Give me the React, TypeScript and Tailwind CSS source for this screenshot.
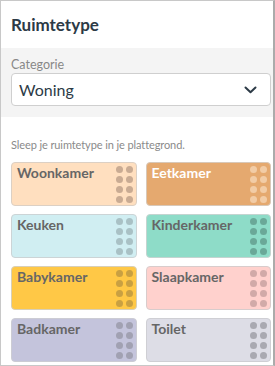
import React from "react";

type Room = { name: string; bg: string; dot: string; text: string; border: string };

const rooms: Room[] = [
  { name: "Woonkamer", bg: "bg-[#ffdfbf]", dot: "bg-[#c9ab93]", text: "text-[#666666]", border: "border-[#dcd0c4]" },
  { name: "Eetkamer", bg: "bg-[#e5a96f]", dot: "bg-[#f2cca6]", text: "text-white", border: "border-[#d8c8b8]" },
  { name: "Keuken", bg: "bg-[#d0eef2]", dot: "bg-[#a9c1c5]", text: "text-[#666666]", border: "border-[#ccd4d6]" },
  { name: "Kinderkamer", bg: "bg-[#8edcc8]", dot: "bg-[#6aa898]", text: "text-[#666666]", border: "border-[#c4d4d0]" },
  { name: "Babykamer", bg: "bg-[#ffc846]", dot: "bg-[#c9a042]", text: "text-[#666666]", border: "border-[#d8cfb8]" },
  { name: "Slaapkamer", bg: "bg-[#ffd1cd]", dot: "bg-[#d1aaa8]", text: "text-[#666666]", border: "border-[#d8cccc]" },
  { name: "Badkamer", bg: "bg-[#c4c4dc]", dot: "bg-[#a1a1b2]", text: "text-[#666666]", border: "border-[#ccccd4]" },
  { name: "Toilet", bg: "bg-[#dddde6]", dot: "bg-[#a9a9b1]", text: "text-[#666666]", border: "border-[#cfcfd4]" },
];

function Card({ r }: { r: Room }) {
  return (
    <div className={`h-[44px] rounded-[4px] border ${r.border} ${r.bg} flex justify-between items-start pl-[5px] pr-[3px] pt-[3px]`}>
      <span className={`-mt-[2px] text-[14px] font-bold leading-[18px] ${r.text}`}>{r.name}</span>
      <div className="grid grid-cols-2 gap-x-[3px] gap-y-[3px] content-start">
        {Array.from({ length: 8 }).map((_, i) => (
          <span key={i} className={`block w-[7px] h-[7px] rounded-full ${r.dot}`} />
        ))}
      </div>
    </div>
  );
}

export default function App() {
  return (
    <div
      className="w-[275px] h-[366px] bg-white border-l border-t border-b border-[#c8c8c8] border-r-2 border-r-[#ababab] flex flex-col overflow-hidden"
      style={{ fontFamily: "Lato, 'Open Sans', sans-serif" }}
    >
      <div className="h-[47px] flex items-center pl-[10px]">
        <h1 className="text-[17px] font-bold text-[#2c3a46] leading-none">Ruimtetype</h1>
      </div>
      <div className="bg-[#f4f4f4] h-[69px] pl-[10px] pr-[2px] pt-[9px]">
        <div className="text-[12.5px] text-[#888888] leading-[15px]">Categorie</div>
        <div className="mt-[1px] h-[33px] bg-white border border-[#cfcfcf] rounded-[4px] flex items-center justify-between pl-[7px] pr-[13px]">
          <span className="text-[16px] text-[#2c3a46]">Woning</span>
          <svg width="13" height="8" viewBox="0 0 13 8" fill="none">
            <path d="M1.5 1.5 L6.5 6.2 L11.5 1.5" stroke="#2c3a46" strokeWidth="2" strokeLinecap="round" strokeLinejoin="round" />
          </svg>
        </div>
      </div>
      <div className="pl-[10px] pr-[2px] pt-[21px]">
        <div className="text-[11px] text-[#8a8a8a] leading-[14px] tracking-[-0.1px]">Sleep je ruimtetype in je plattegrond.</div>
        <div className="mt-[10px] grid grid-cols-2 gap-x-[9px] gap-y-[8px]">
          {rooms.map((r) => (
            <Card key={r.name} r={r} />
          ))}
        </div>
      </div>
    </div>
  );
}
